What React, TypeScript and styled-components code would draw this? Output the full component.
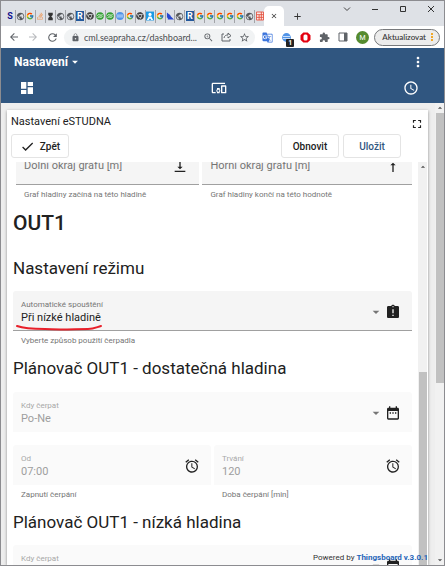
import React from "react";
import styled, { createGlobalStyle, css } from "styled-components";
import {
  MdDashboard, MdDevicesOther, MdAccessTime, MdMoreVert, MdArrowDropDown, MdArrowDropUp, MdCheck,
  MdFullscreen, MdAlarm, MdDateRange, MdAssignmentLate, MdVerticalAlignBottom, MdVerticalAlignTop,
  MdLock, MdExtension, MdStarBorder, MdZoomIn, MdClose, MdAdd, MdArrowBack, MdArrowForward, MdRefresh,
  MdPublic, MdHourglassFull, MdGTranslate,
} from "react-icons/md";
import { FcGoogle } from "react-icons/fc";
import { FaStackOverflow, FaChrome } from "react-icons/fa";

const Global = createGlobalStyle`
  *, *::before, *::after { box-sizing: border-box; }
  html, body { margin: 0; height: 100%; overflow: hidden; }
  body { font-family: Roboto, "Liberation Sans", sans-serif; color: #212121; background: #eee; }
  button, input, select { font: inherit; color: inherit; }
  svg { display: block; flex: none; }
`;

const Window = styled.div`
  height: 100vh;
  display: flex;
  flex-direction: column;
  border: 1px solid #8c8c90;
  overflow: hidden;
  position: relative;
`;

const IconButton = styled.button<{ $w?: number; $color?: string }>`
  width: ${(p) => p.$w ?? 16}px;
  height: 20px;
  padding: 0;
  border: 0;
  background: none;
  display: flex;
  align-items: center;
  justify-content: center;
  flex: none;
  color: ${(p) => p.$color ?? "#5f6368"};
`;

const TabStrip = styled.div`
  height: 25px;
  flex: none;
  display: flex;
  align-items: flex-end;
  background: #dee1e6;
  padding-left: 5px;
`;

const Tab = styled.button`
  flex: 1;
  min-width: 0;
  height: 20px;
  padding: 0;
  border: 0;
  background: none;
  display: flex;
  justify-content: center;
  align-items: center;
`;

const Divider = styled.span`
  width: 1px;
  flex: none;
  height: 13px;
  background: #a2a4a8;
`;

const TabGroup = styled.div`
  display: flex;
  align-items: center;
  width: 258px;
  flex: none;
`;

const ActiveTab = styled.div`
  height: 20px;
  width: 20px;
  flex: none;
  display: flex;
  justify-content: center;
  background: #fff;
  border-radius: 5px 5px 0 0;
`;

const WindowControls = styled.div`
  display: flex;
  margin-left: auto;
  align-self: flex-start;
  gap: 12px;
  padding-right: 5px;
  ${IconButton} {
    height: 16px;
  }
`;

const Toolbar = styled.div`
  height: 22px;
  flex: none;
  display: flex;
  align-items: center;
  background: #fff;
  padding: 0 4px 0 5px;
`;

const AddressBar = styled.div`
  flex: 1;
  min-width: 0;
  height: 17px;
  margin-left: 4px;
  display: flex;
  align-items: center;
  gap: 2px;
  padding: 0 3px 0 7px;
  border-radius: 9px;
  background: #f1f3f4;
`;

const Address = styled.input`
  flex: 1;
  min-width: 0;
  border: 0;
  padding: 0 0 0 2px;
  background: none;
  font: 9px Lato, "Noto Sans", sans-serif;
  color: #4a4d51;
`;

const Extensions = styled.div`
  display: flex;
  gap: 3px;
  margin: 0 4px;
`;

const Badge = styled.span`
  position: absolute;
  right: 0;
  bottom: 0;
  padding: 0 2px;
  border-radius: 1px;
  background: #222;
  color: #fff;
  font-size: 7px;
  line-height: 8px;
  font-weight: 700;
`;

const BadgeHost = styled(IconButton)`
  position: relative;
`;

const UpdateButton = styled.button`
  height: 17px;
  min-width: 64px;
  flex: none;
  display: flex;
  align-items: center;
  justify-content: space-between;
  padding: 0 1px 0 7px;
  border: 1px solid #77797c;
  border-radius: 9px;
  background: #ececec;
  font: 500 8px Lato, "Noto Sans", sans-serif;
  color: #333;
`;

const Header = styled.header`
  height: 55px;
  flex: none;
  background: #305680;
  color: #fff;
  display: flex;
  flex-direction: column;
`;

const HeaderRow = styled.div<{ $nav?: boolean }>`
  display: flex;
  align-items: center;
  justify-content: space-between;
  height: 27px;
  padding: 0 18px 0 13px;
  ${(p) => p.$nav && css`height: 26px; padding: 0 25px 0 18px;`}
`;

const MenuButton = styled.button`
  display: flex;
  align-items: center;
  padding: 0;
  border: 0;
  background: none;
  font-size: 12px;
  font-weight: 700;
`;

const Body = styled.div`
  flex: 1;
  min-height: 0;
  display: flex;
  background: #eee;
`;

const Main = styled.main`
  flex: 1;
  min-width: 0;
  display: flex;
  padding: 7px 7px 0 6px;
`;

const Card = styled.section`
  flex: 1;
  min-width: 0;
  display: flex;
  flex-direction: column;
  background: #fff;
  box-shadow: 0 1px 3px rgba(0, 0, 0, 0.4);
`;

const CardTitle = styled.div`
  display: flex;
  align-items: center;
  justify-content: space-between;
  height: 22px;
  flex: none;
  padding: 0 3px 0 4px;
  font-size: 11px;
  ${IconButton} {
    align-self: flex-end;
    height: 16px;
  }
`;

const Actions = styled.div`
  display: flex;
  gap: 4px;
  flex: none;
  height: 30px;
  padding: 2px 27px 4px 4px;
`;

const ActionButton = styled.button<{ $primary?: boolean }>`
  min-width: 58px;
  height: 24px;
  display: flex;
  align-items: center;
  justify-content: center;
  gap: 5px;
  padding: 0;
  border: 1px solid #e4e4e4;
  border-radius: 3px;
  background: #fff;
  font-size: 10px;
  font-weight: 500;
  color: ${(p) => (p.$primary ? "#305680" : "#212121")};
`;

const Spacer = styled.span`
  flex: 1;
`;

const ScrollPane = styled.div`
  flex: 1;
  min-height: 0;
  display: flex;
  padding-right: 1px;
`;

const ScrollContent = styled.div`
  flex: 1;
  min-width: 0;
  overflow: hidden;
  padding: 0 6px;
`;

const Scrolled = styled.div`
  margin-top: -17px;
`;

const ScrollTrack = styled.div`
  width: 9px;
  flex: none;
  display: flex;
  flex-direction: column;
  align-items: center;
  background: #f1f1f1;
  color: #505050;
`;

const Thumb = styled.div<{ $size: number }>`
  width: 8px;
  flex: ${(p) => p.$size} 1 0;
  background: #c1c1c1;
`;

const Rest = styled.div<{ $size: number }>`
  flex: ${(p) => p.$size} 1 0;
`;

const Title = styled.h1`
  margin: 10px 0 0;
  font-size: 21px;
  line-height: 26px;
  font-weight: 500;
`;

const Subtitle = styled.h2<{ $gap: number }>`
  margin: ${(p) => p.$gap}px 0 0;
  font-size: 17px;
  line-height: 22px;
  font-weight: 400;
`;

const Row = styled.div<{ $gap: number; $columns?: string }>`
  display: grid;
  grid-template-columns: ${(p) => p.$columns ?? "minmax(0, 1fr)"};
  gap: 3px;
  margin-top: ${(p) => p.$gap}px;
`;

const InsetRow = styled(Row)`
  padding-left: 3px;
`;

const Box = styled.div<{ $disabled?: boolean }>`
  height: 40px;
  display: flex;
  align-items: center;
  padding: 2px 11px 0 8px;
  border-radius: 3px 3px 0 0;
  background: ${(p) => (p.$disabled ? "#fafafa" : "#f5f5f5")};
  border-bottom: 1px solid ${(p) => (p.$disabled ? "#fafafa" : "#a0a0a0")};
`;

const Stack = styled.div<{ $disabled?: boolean }>`
  flex: 1;
  min-width: 0;
  display: flex;
  flex-direction: column;
  color: ${(p) => (p.$disabled ? "#9e9e9e" : "#212121")};
`;

const FieldLabel = styled.label<{ $large?: boolean; $disabled?: boolean }>`
  padding-top: ${(p) => (p.$large ? 2 : 0)}px;
  font-size: ${(p) => (p.$large ? 11 : 8)}px;
  line-height: 12px;
  color: ${(p) => (p.$disabled ? "#a8a8a8" : "#757575")};
`;

const valueStyle = css`
  width: 100%;
  height: 14px;
  padding: 0;
  border: 0;
  background: none;
  appearance: none;
  font-size: 11px;
  line-height: 14px;
  opacity: 1;
`;
const Value = styled.input`
  ${valueStyle}
`;
const EmptyValue = styled.input`
  ${valueStyle}
  height: 1px;
`;
const Choice = styled.select`
  ${valueStyle}
`;

const Arrow = styled.span`
  color: #757575;
  margin-right: 1px;
`;

const Hint = styled.div`
  padding: 4px 8px 0;
  font-size: 8px;
  line-height: 11px;
  color: #757575;
`;

const Marker = styled.svg`
  position: absolute;
  left: 14px;
  top: 322px;
`;

const Footer = styled.footer`
  position: absolute;
  right: 16px;
  bottom: 1px;
  font-size: 8px;
  line-height: 12px;
  color: #333;
  a { color: #1f65b8; font-weight: 700; text-decoration: none; }
`;

type FieldProps = {
  id: string;
  label: string;
  value?: string;
  hint?: string;
  disabled?: boolean;
  select?: boolean;
  icon: React.ReactNode;
};

function Field({ id, label, value, hint, disabled, select, icon }: FieldProps) {
  return (
    <div>
      <Box $disabled={disabled}>
        <Stack $disabled={disabled}>
          <FieldLabel htmlFor={id} $large={!value} $disabled={disabled}>{label}</FieldLabel>
          {select && (
            <Choice id={id} disabled={disabled} defaultValue={value}>
              <option>{value}</option>
            </Choice>
          )}
          {!select && value && <Value id={id} disabled={disabled} defaultValue={value} />}
          {!value && <EmptyValue id={id} />}
        </Stack>
        {select && <Arrow><MdArrowDropDown size={16} /></Arrow>}
        {icon}
      </Box>
      {hint && <Hint>{hint}</Hint>}
    </div>
  );
}

function Tile({ color, mark, text = "#fff" }: { color: string; mark: string; text?: string }) {
  return (
    <svg width="8" height="10" viewBox="0 0 8 10">
      <rect width="8" height="10" fill={color} />
      <text x="4" y="8" textAnchor="middle" fontSize="9" fontWeight="700" fill={text} fontFamily="Roboto">{mark}</text>
    </svg>
  );
}

function Swirl() {
  return (
    <svg width="8" height="8" viewBox="0 0 9 9">
      <circle cx="4.5" cy="4.5" r="4.3" fill="#35a035" />
      <path d="M1.5 4C3 1.5 5 5 7.5 3M1.8 6.3C4 4 5 7.4 7.3 5" stroke="#fff" fill="none" />
    </svg>
  );
}

function User() {
  return (
    <svg width="8" height="10" viewBox="0 0 9 10">
      <rect width="9" height="10" fill="#1c9be6" />
      <circle cx="4.5" cy="3.2" r="1.8" fill="#fff" />
      <path d="M1 9.5 3 5.5h3L8 9.5H6L4.5 7.5 3 9.5z" fill="#fff" />
    </svg>
  );
}

function Sail() {
  return (
    <svg width="8" height="9" viewBox="0 0 9 9">
      <path d="M1 0 5 3V6H1zM5 4 9 8H2V6z" fill="#2847d0" />
    </svg>
  );
}

function Sheet() {
  return (
    <svg width="8" height="10" viewBox="0 0 9 10">
      <path d="M.5.5h8v9h-8zM.5 3.5h8M.5 6.5h8M3.5 3.5v6M6 .5v9" fill="#fbe9e6" stroke="#e4503e" />
    </svg>
  );
}

function Globe({ size = 8 }: { size?: number }) {
  return (
    <svg width={size} height={size} viewBox="0 0 9 9">
      <circle cx="4.5" cy="4.5" r="4.4" fill="#5194e8" />
      <path d="M1 3.5h7M1 5.5h7" stroke="#c8defa" />
    </svg>
  );
}

const gray = "#55585c";
const web = <MdPublic size={9} color={gray} />;
const google = <FcGoogle size={8} />;
const chrome = <FaChrome size={8} color="#444" />;
const tabs: [string, React.ReactNode][] = [
  ["Seznam", <Tile color="transparent" mark="S" text="#10108c" />],
  ["Web", web],
  ["Google", google],
  ["Stack Overflow", <FaStackOverflow size={8} color="#ee9a5c" />],
  ["Hodiny", <MdHourglassFull size={9} color="#333" />],
  ["Web", web],
  ["Web", web],
  ["R", <Tile color="#24599c" mark="R" />],
  ["Chrome", chrome],
  ["Studna", <Swirl />],
  ["Studna", <Swirl />],
  ["Síť", <Globe />],
  ["Google", google],
  ["Chrome", chrome],
  ["Profil", <User />],
  ["Google", google],
  ["Plachta", <Sail />],
  ["Web", web],
  ["R", <Tile color="#24599c" mark="R" />],
  ["Google", google],
  ["Google", google],
  ["Google", google],
  ["Google", google],
  ["Google", google],
  ["Web", web],
  ["Tabulka", <Sheet />],
];

export default function App() {
  return (
    <Window>
      <Global />
      <TabStrip>
        <TabGroup>
          {tabs.map(([name, icon], i) => (
            <React.Fragment key={i}>
              {i > 0 && <Divider />}
              <Tab aria-label={name}>{icon}</Tab>
            </React.Fragment>
          ))}
        </TabGroup>
        <ActiveTab>
          <IconButton $color="#333" aria-label="Zavřít kartu"><MdClose size={8} /></IconButton>
        </ActiveTab>
        <IconButton $w={26} $color="#333" aria-label="Nová karta"><MdAdd size={11} /></IconButton>
        <WindowControls>
          <IconButton aria-label="Hledat karty">
            <svg width="8" height="8"><path d="M1 2.5l3 3 3-3" stroke="#444" fill="none" /></svg>
          </IconButton>
          <IconButton aria-label="Minimalizovat">
            <svg width="8" height="8"><path d="M1 4.5h6" stroke="#333" /></svg>
          </IconButton>
          <IconButton aria-label="Maximalizovat">
            <svg width="8" height="8"><path d="M1.5 1.5h5v5h-5z" stroke="#333" fill="none" /></svg>
          </IconButton>
          <IconButton aria-label="Zavřít">
            <svg width="8" height="8"><path d="M1 1l6 6M7 1l-6 6" stroke="#333" /></svg>
          </IconButton>
        </WindowControls>
      </TabStrip>
      <Toolbar>
        <IconButton aria-label="Zpět"><MdArrowBack size={12} /></IconButton>
        <IconButton $w={22} $color="#b8babd" aria-label="Vpřed"><MdArrowForward size={12} /></IconButton>
        <IconButton aria-label="Obnovit stránku"><MdRefresh size={13} /></IconButton>
        <AddressBar>
          <MdLock size={9} color="#5f6368" />
          <Address aria-label="Adresa" defaultValue="cml.seapraha.cz/dashboard..." />
          <IconButton aria-label="Lupa"><MdZoomIn size={11} /></IconButton>
          <IconButton aria-label="Sdílet">
            <svg width="11" height="10" viewBox="0 0 11 10" fill="none" stroke="#5f6368">
              <path d="M3 2H1v7h8V7M3 6c.5-2.5 2-3 4-3V1l3 2.700L7 6V4.5" />
            </svg>
          </IconButton>
          <IconButton aria-label="Oblíbené"><MdStarBorder size={11} /></IconButton>
        </AddressBar>
        <Extensions>
          <IconButton $color="#3b74dc" aria-label="Překladač"><MdGTranslate size={11} /></IconButton>
          <BadgeHost aria-label="Síť"><Globe size={9} /><Badge>1</Badge></BadgeHost>
          <IconButton aria-label="Blokování reklam">
            <svg width="11" height="11" viewBox="0 0 11 11">
              <path d="M3.3.5h4.4l2.8 2.8v4.4l-2.8 2.8H3.3L.5 7.7V3.3z" fill="#e3000f" />
              <rect x="3.5" y="2.5" width="4" height="6" rx="1.5" fill="#fff" />
            </svg>
          </IconButton>
          <IconButton aria-label="Rozšíření"><MdExtension size={11} /></IconButton>
          <IconButton aria-label="Postranní panel">
            <svg width="10" height="10"><path d="M1 1h8v8H1z" stroke="#5f6368" fill="none" /><path d="M6 1h3v8H6z" fill="#5f6368" /></svg>
          </IconButton>
          <IconButton aria-label="Profil M">
            <svg width="13" height="13">
              <circle cx="6.5" cy="6.5" r="6.5" fill="#558b2f" />
              <text x="6.5" y="9" textAnchor="middle" fontSize="7" fill="#fff" fontFamily="Roboto">M</text>
            </svg>
          </IconButton>
        </Extensions>
        <UpdateButton>Aktualizovat <MdMoreVert size={12} color="#f29900" /></UpdateButton>
      </Toolbar>
      <Header>
        <HeaderRow>
          <MenuButton>Nastavení <MdArrowDropDown size={14} /></MenuButton>
          <IconButton $color="#fff" aria-label="Další"><MdMoreVert size={16} /></IconButton>
        </HeaderRow>
        <HeaderRow $nav>
          <IconButton $color="#fff" aria-label="Panely"><MdDashboard size={16} /></IconButton>
          <IconButton $color="#fff" aria-label="Zařízení"><MdDevicesOther size={16} /></IconButton>
          <IconButton $color="#fff" aria-label="Čas"><MdAccessTime size={16} /></IconButton>
        </HeaderRow>
      </Header>
      <Body>
        <Main>
          <Card>
            <CardTitle>
              Nastavení eSTUDNA
              <IconButton $color="#212121" aria-label="Celá obrazovka"><MdFullscreen size={14} /></IconButton>
            </CardTitle>
            <Actions>
              <ActionButton><MdCheck size={15} /> Zpět</ActionButton>
              <Spacer />
              <ActionButton>Obnovit</ActionButton>
              <ActionButton $primary>Uložit</ActionButton>
            </Actions>
            <ScrollPane>
              <ScrollContent>
                <Scrolled>
                  <InsetRow $gap={0} $columns="minmax(0, 7fr) minmax(0, 8fr)">
                    <Field id="low" label="Dolní okraj grafu [m]" hint="Graf hladiny začíná na této hladině" icon={<MdVerticalAlignBottom size={16} />} />
                    <Field id="high" label="Horní okraj grafu [m]" hint="Graf hladiny končí na této hodnotě" icon={<MdVerticalAlignTop size={16} />} />
                  </InsetRow>
                  <Title>OUT1</Title>
                  <Subtitle $gap={21}>Nastavení režimu</Subtitle>
                  <Row $gap={12}>
                    <Field id="mode" select label="Automatické spouštění" value="Při nízké hladině" hint="Vyberte způsob použití čerpadla" icon={<MdAssignmentLate size={16} />} />
                  </Row>
                  <Subtitle $gap={11}>Plánovač OUT1 - dostatečná hladina</Subtitle>
                  <Row $gap={13}>
                    <Field id="days" select disabled label="Kdy čerpat" value="Po-Ne" icon={<MdDateRange size={16} />} />
                  </Row>
                  <Row $gap={13} $columns="repeat(2, minmax(0, 1fr))">
                    <Field id="from" disabled label="Od" value="07:00" hint="Zapnutí čerpání" icon={<MdAlarm size={16} />} />
                    <Field id="duration" disabled label="Trvání" value="120" hint="Doba čerpání [min]" icon={<MdAlarm size={16} />} />
                  </Row>
                  <Subtitle $gap={11}>Plánovač OUT1 - nízká hladina</Subtitle>
                  <Row $gap={12}>
                    <Field id="days-low" select disabled label="Kdy čerpat" value="Po-Ne" icon={<MdDateRange size={16} />} />
                  </Row>
                </Scrolled>
              </ScrollContent>
              <ScrollTrack>
                <MdArrowDropUp size={10} />
                <Rest $size={51} />
                <Thumb $size={49} />
              </ScrollTrack>
            </ScrollPane>
          </Card>
        </Main>
        <ScrollTrack>
          <MdArrowDropUp size={10} />
          <Thumb $size={61} />
          <Rest $size={39} />
          <MdArrowDropDown size={10} />
        </ScrollTrack>
      </Body>
      <Marker width="90" height="10" viewBox="0 0 90 10" fill="none">
        <path d="M2 3C10 6 20 6 30 6C45 7 60 6 73 6C79 6 82 4 86 3" stroke="#e8202a" strokeWidth="2" strokeLinecap="round" />
      </Marker>
      <Footer>Powered by <a href="#thingsboard">Thingsboard v.3.0.1</a></Footer>
    </Window>
  );
}
